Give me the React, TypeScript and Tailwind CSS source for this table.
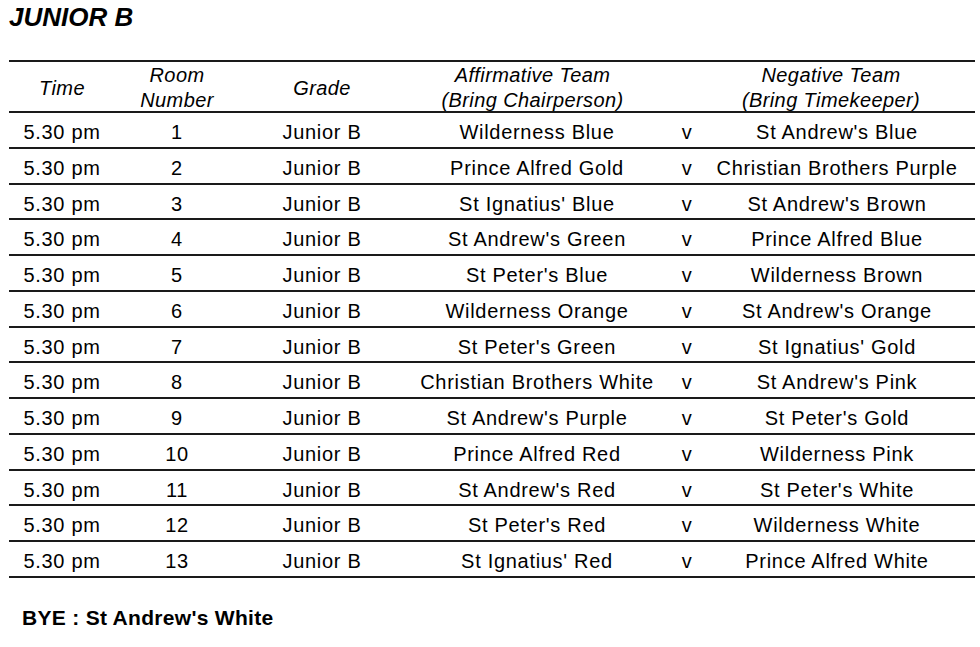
import React from "react";

const rows: [string, string, string][] = [
  ["1", "Wilderness Blue", "St Andrew's Blue"],
  ["2", "Prince Alfred Gold", "Christian Brothers Purple"],
  ["3", "St Ignatius' Blue", "St Andrew's Brown"],
  ["4", "St Andrew's Green", "Prince Alfred Blue"],
  ["5", "St Peter's Blue", "Wilderness Brown"],
  ["6", "Wilderness Orange", "St Andrew's Orange"],
  ["7", "St Peter's Green", "St Ignatius' Gold"],
  ["8", "Christian Brothers White", "St Andrew's Pink"],
  ["9", "St Andrew's Purple", "St Peter's Gold"],
  ["10", "Prince Alfred Red", "Wilderness Pink"],
  ["11", "St Andrew's Red", "St Peter's White"],
  ["12", "St Peter's Red", "Wilderness White"],
  ["13", "St Ignatius' Red", "Prince Alfred White"],
];

const grid = "grid grid-cols-[106px_124px_166px_264px_36px_264px_6px]";

export default function App() {
  return (
    <div className="w-[980px] h-[647px] bg-white text-black font-['Liberation_Sans',Arial,sans-serif] overflow-hidden">
      <div className="pt-[4px] pl-[9px] text-[26px] leading-none font-bold italic">JUNIOR B</div>
      <div className="ml-[9px] mt-[30px] w-[966px]">
        <div className={`${grid} h-[53px] border-t-2 border-b-2 border-[#1a1a1a] italic text-[20px] leading-[25px] tracking-[0.4px] text-center pt-[1px]`}>
          <div className="flex items-center justify-center">Time</div>
          <div className="flex items-center justify-center">
            <div>
              Room
              <br />
              Number
            </div>
          </div>
          <div className="flex items-center justify-center">Grade</div>
          <div className="flex items-center justify-center pr-[9px]">
            <div>
              Affirmative Team
              <br />
              (Bring Chairperson)
            </div>
          </div>
          <div />
          <div className="flex items-center justify-center pr-[12px]">
            <div>
              Negative Team
              <br />
              (Bring Timekeeper)
            </div>
          </div>
          <div />
        </div>
        {rows.map(([room, aff, neg]) => (
          <div
            key={room}
            className={`${grid} h-[35.75px] border-b-2 border-[#1a1a1a] text-[20px] tracking-[0.7px] text-center pt-[4px]`}
          >
            <div className="flex items-center justify-center">5.30 pm</div>
            <div className="flex items-center justify-center">{room}</div>
            <div className="flex items-center justify-center">Junior B</div>
            <div className="flex items-center justify-center whitespace-nowrap">{aff}</div>
            <div className="flex items-center justify-center">v</div>
            <div className="flex items-center justify-center whitespace-nowrap">{neg}</div>
            <div />
          </div>
        ))}
      </div>
      <div className="mt-[24px] pl-[22px] text-[21px] font-bold tracking-[0.3px]">BYE : St Andrew's White</div>
    </div>
  );
}
